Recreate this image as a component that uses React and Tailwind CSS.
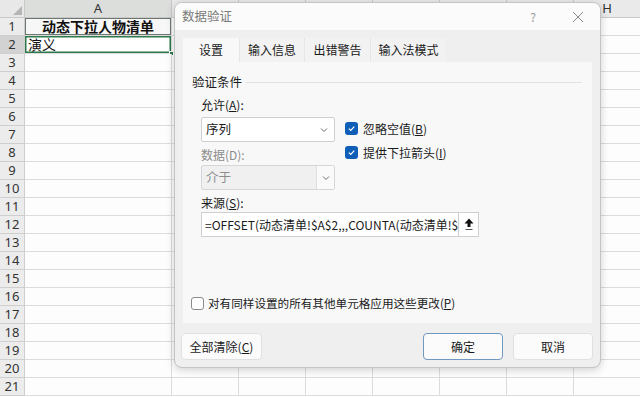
import React from "react";

const FONT = "font-['Noto_Sans_CJK_SC','Noto_Sans',sans-serif]";
const cols = ["B", "C", "D", "E", "F", "G", "H"];
const rows = Array.from({ length: 21 }, (_, i) => i + 1);

function Chevron() {
  return (
    <svg width="10" height="10" viewBox="0 0 10 10" className="text-[#6b6b6b]">
      <path d="M2 3.5 L5 6.5 L8 3.5" fill="none" stroke="currentColor" strokeWidth="1" />
    </svg>
  );
}

function Check() {
  return (
    <span className="w-[13px] h-[13px] rounded-[3px] bg-[#0f5fb8] flex items-center justify-center shrink-0">
      <svg width="9" height="9" viewBox="0 0 10 10">
        <path d="M2 5.2 L4.2 7.2 L8 2.8" fill="none" stroke="white" strokeWidth="1.3" />
      </svg>
    </span>
  );
}

function Sheet() {
  return (
    <div className="flex flex-col">
      <div className="flex h-[18px]">
        <div className="w-[25px] shrink-0 bg-[#e8e8e8] border-r border-b border-[#c9c9c9] relative">
          <div className="absolute right-[2px] bottom-[2px] w-0 h-0 border-l-[9px] border-l-transparent border-b-[9px] border-b-[#b5b5b5]" />
        </div>
        <div className="w-[147px] shrink-0 bg-[#dcdedc] border-r border-b border-[#c9c9c9] flex items-center justify-center text-[13px] text-[#333] font-['Noto_Sans',sans-serif]">
          A
        </div>
        {cols.map((c) => (
          <div
            key={c}
            className="w-[67px] shrink-0 bg-[#eaeaea] border-r border-b border-[#c9c9c9] flex items-center justify-center text-[13px] text-[#333] font-['Noto_Sans',sans-serif]"
          >
            {c === "H" ? c : null}
          </div>
        ))}
      </div>
      {rows.map((r) => (
        <div key={r} className="flex h-[18px]">
          <div
            className={
              "w-[25px] shrink-0 border-r border-b border-[#cfcfcf] flex items-center justify-center text-[13px] text-[#333] font-['Noto_Sans',sans-serif] " +
              (r === 2 ? "bg-[#d2d2d2]" : "bg-[#ececec]")
            }
          >
            {r}
          </div>
          <div
            className={
              "w-[147px] shrink-0 border-r border-b border-[#dcdcdc] relative flex items-center " +
              (r === 1
                ? "bg-[#f7f7f7] shadow-[inset_0_0_0_1px_#6d7770] justify-center font-bold text-[14px] text-[#111]"
                : r === 2
                ? "bg-white shadow-[inset_0_0_0_1.5px_#2b7a4b] text-[14px] text-[#111] pl-[3px]"
                : "bg-[#fdfdfd]")
            }
          >
            {r === 1 && "动态下拉人物清单"}
            {r === 2 && "演义"}
            {r === 2 && (
              <div className="absolute right-[-3px] bottom-[-3px] w-[5px] h-[5px] bg-[#2b7a4b] border border-white" />
            )}
          </div>
          {cols.map((c) => (
            <div key={c} className="w-[67px] shrink-0 border-r border-b border-[#dcdcdc] bg-[#fdfdfd]" />
          ))}
        </div>
      ))}
    </div>
  );
}

function Dialog() {
  return (
    <div className="absolute left-[174px] top-[2px] w-[427px] h-[366px] rounded-[8px] border border-[#c4c4c4] bg-[#efefef] shadow-[0_2px_8px_rgba(0,0,0,0.18)] overflow-hidden flex flex-col text-[12px] text-[#1a1a1a]">
      <div className="h-[27px] bg-[#fbfbfb] flex items-center pl-[7px] shrink-0">
        <span className="text-[12.5px] text-[#7a7a7a]">数据验证</span>
        <div className="flex-1" />
        <span className="text-[12px] text-[#9a9a9a] w-[12px] text-center mr-[33px]">?</span>
        <svg width="12" height="12" viewBox="0 0 12 12" className="mr-[16px]">
          <path d="M1 1 L11 11 M11 1 L1 11" stroke="#8a8a8a" strokeWidth="1" />
        </svg>
      </div>
      <div className="flex-1 flex flex-col px-[7px] pt-[8px] pb-[8px]">
        <div className="flex h-[24px] ml-[1px] shrink-0">
          <div className="w-[56px] bg-[#f8f8f9] flex items-center justify-center">设置</div>
          <div className="w-[65px] bg-[#f2f2f2] flex items-center justify-center border-l border-[#e6e6e6]">输入信息</div>
          <div className="w-[66px] bg-[#f2f2f2] flex items-center justify-center border-l border-[#e6e6e6]">出错警告</div>
          <div className="w-[76px] bg-[#f2f2f2] flex items-center justify-center border-l border-[#e6e6e6]">输入法模式</div>
        </div>
        <div className="h-[261px] shrink-0 ml-[1px] mr-[1px] bg-[#f8f8f9] flex flex-col px-[9px] pt-[11px]">
          <div className="flex items-center h-[18px]">
            <span className="text-[12.5px]">验证条件</span>
            <div className="flex-1 h-px bg-[#e2e2e2] ml-[4px] mr-[1px]" />
          </div>
          <div className="pl-[9px] flex flex-col">
            <div className="h-[18px] mt-[5px] flex items-center">
              允许(<span className="underline">A</span>):
            </div>
            <div className="flex mt-[3px]">
              <div className="flex flex-col">
                <div className="w-[134px] h-[25px] bg-white border border-[#d0d0d0] rounded-[2px] flex items-center pl-[4px] pr-[5px]">
                  <span className="flex-1 text-[12.5px]">序列</span>
                  <Chevron />
                </div>
                <div className="h-[18px] mt-[4px] flex items-center text-[#8c8c8c]">数据(D):</div>
                <div className="w-[134px] h-[25px] mt-[1px] bg-[#f0f0f0] border border-[#d6d6d6] rounded-[2px] flex items-center pl-[4px]">
                  <span className="flex-1 text-[#8c8c8c] text-[12.5px]">介于</span>
                  <div className="w-[18px] h-full bg-[#fafafa] border-l border-[#dedede] flex items-center justify-center">
                    <Chevron />
                  </div>
                </div>
              </div>
              <div className="flex flex-col ml-[10px] mt-[5px] gap-[11px]">
                <div className="flex items-center gap-[5px] h-[13px]">
                  <Check />
                  <span>忽略空值(<span className="underline">B</span>)</span>
                </div>
                <div className="flex items-center gap-[5px] h-[13px]">
                  <Check />
                  <span>提供下拉箭头(<span className="underline">I</span>)</span>
                </div>
              </div>
            </div>
            <div className="h-[18px] mt-[4px] flex items-center">
              来源(<span className="underline">S</span>):
            </div>
            <div className="w-[278px] h-[25px] bg-white border border-[#cfcfcf] flex items-center">
              <span className="flex-1 pl-[3px] overflow-hidden whitespace-nowrap text-[12px]">
                =OFFSET(动态清单!$A$2,,,COUNTA(动态清单!$
              </span>
              <div className="w-[20px] h-full border-l border-[#cfcfcf] flex items-center justify-center shrink-0">
                <svg width="10" height="13" viewBox="0 0 10 13">
                  <path d="M5 0.5 L9.5 5.5 L6.5 5.5 L6.5 9 L3.5 9 L3.5 5.5 L0.5 5.5 Z" fill="#111" />
                  <rect x="1.5" y="11" width="7" height="1" fill="#555" />
                </svg>
              </div>
            </div>
          </div>
          <div className="flex items-center gap-[4px] h-[13px] mt-[60px] -ml-[1px]">
            <span className="w-[13px] h-[13px] rounded-[3px] border border-[#8a8a8a] bg-white shrink-0" />
            <span className="text-[11.6px] whitespace-nowrap">对有同样设置的所有其他单元格应用这些更改(<span className="underline">P</span>)</span>
          </div>
        </div>
        <div className="flex mt-[10px] h-[27px] shrink-0">
          <div className="w-[81px] bg-[#fbfbfb] border border-[#e0e0e0] rounded-[4px] flex items-center justify-center -ml-[1px]">
            全部清除(<span className="underline">C</span>)
          </div>
          <div className="flex-1" />
          <div className="w-[80px] bg-[#fbfbfb] border border-[#6f99c0] rounded-[4px] flex items-center justify-center">
            确定
          </div>
          <div className="w-[80px] bg-[#fbfbfb] border border-[#e0e0e0] rounded-[4px] flex items-center justify-center ml-[10px]">
            取消
          </div>
        </div>
      </div>
    </div>
  );
}

export default function App() {
  return (
    <div className={"relative w-[640px] h-[397px] overflow-hidden bg-white " + FONT}>
      <Sheet />
      <Dialog />
    </div>
  );
}
